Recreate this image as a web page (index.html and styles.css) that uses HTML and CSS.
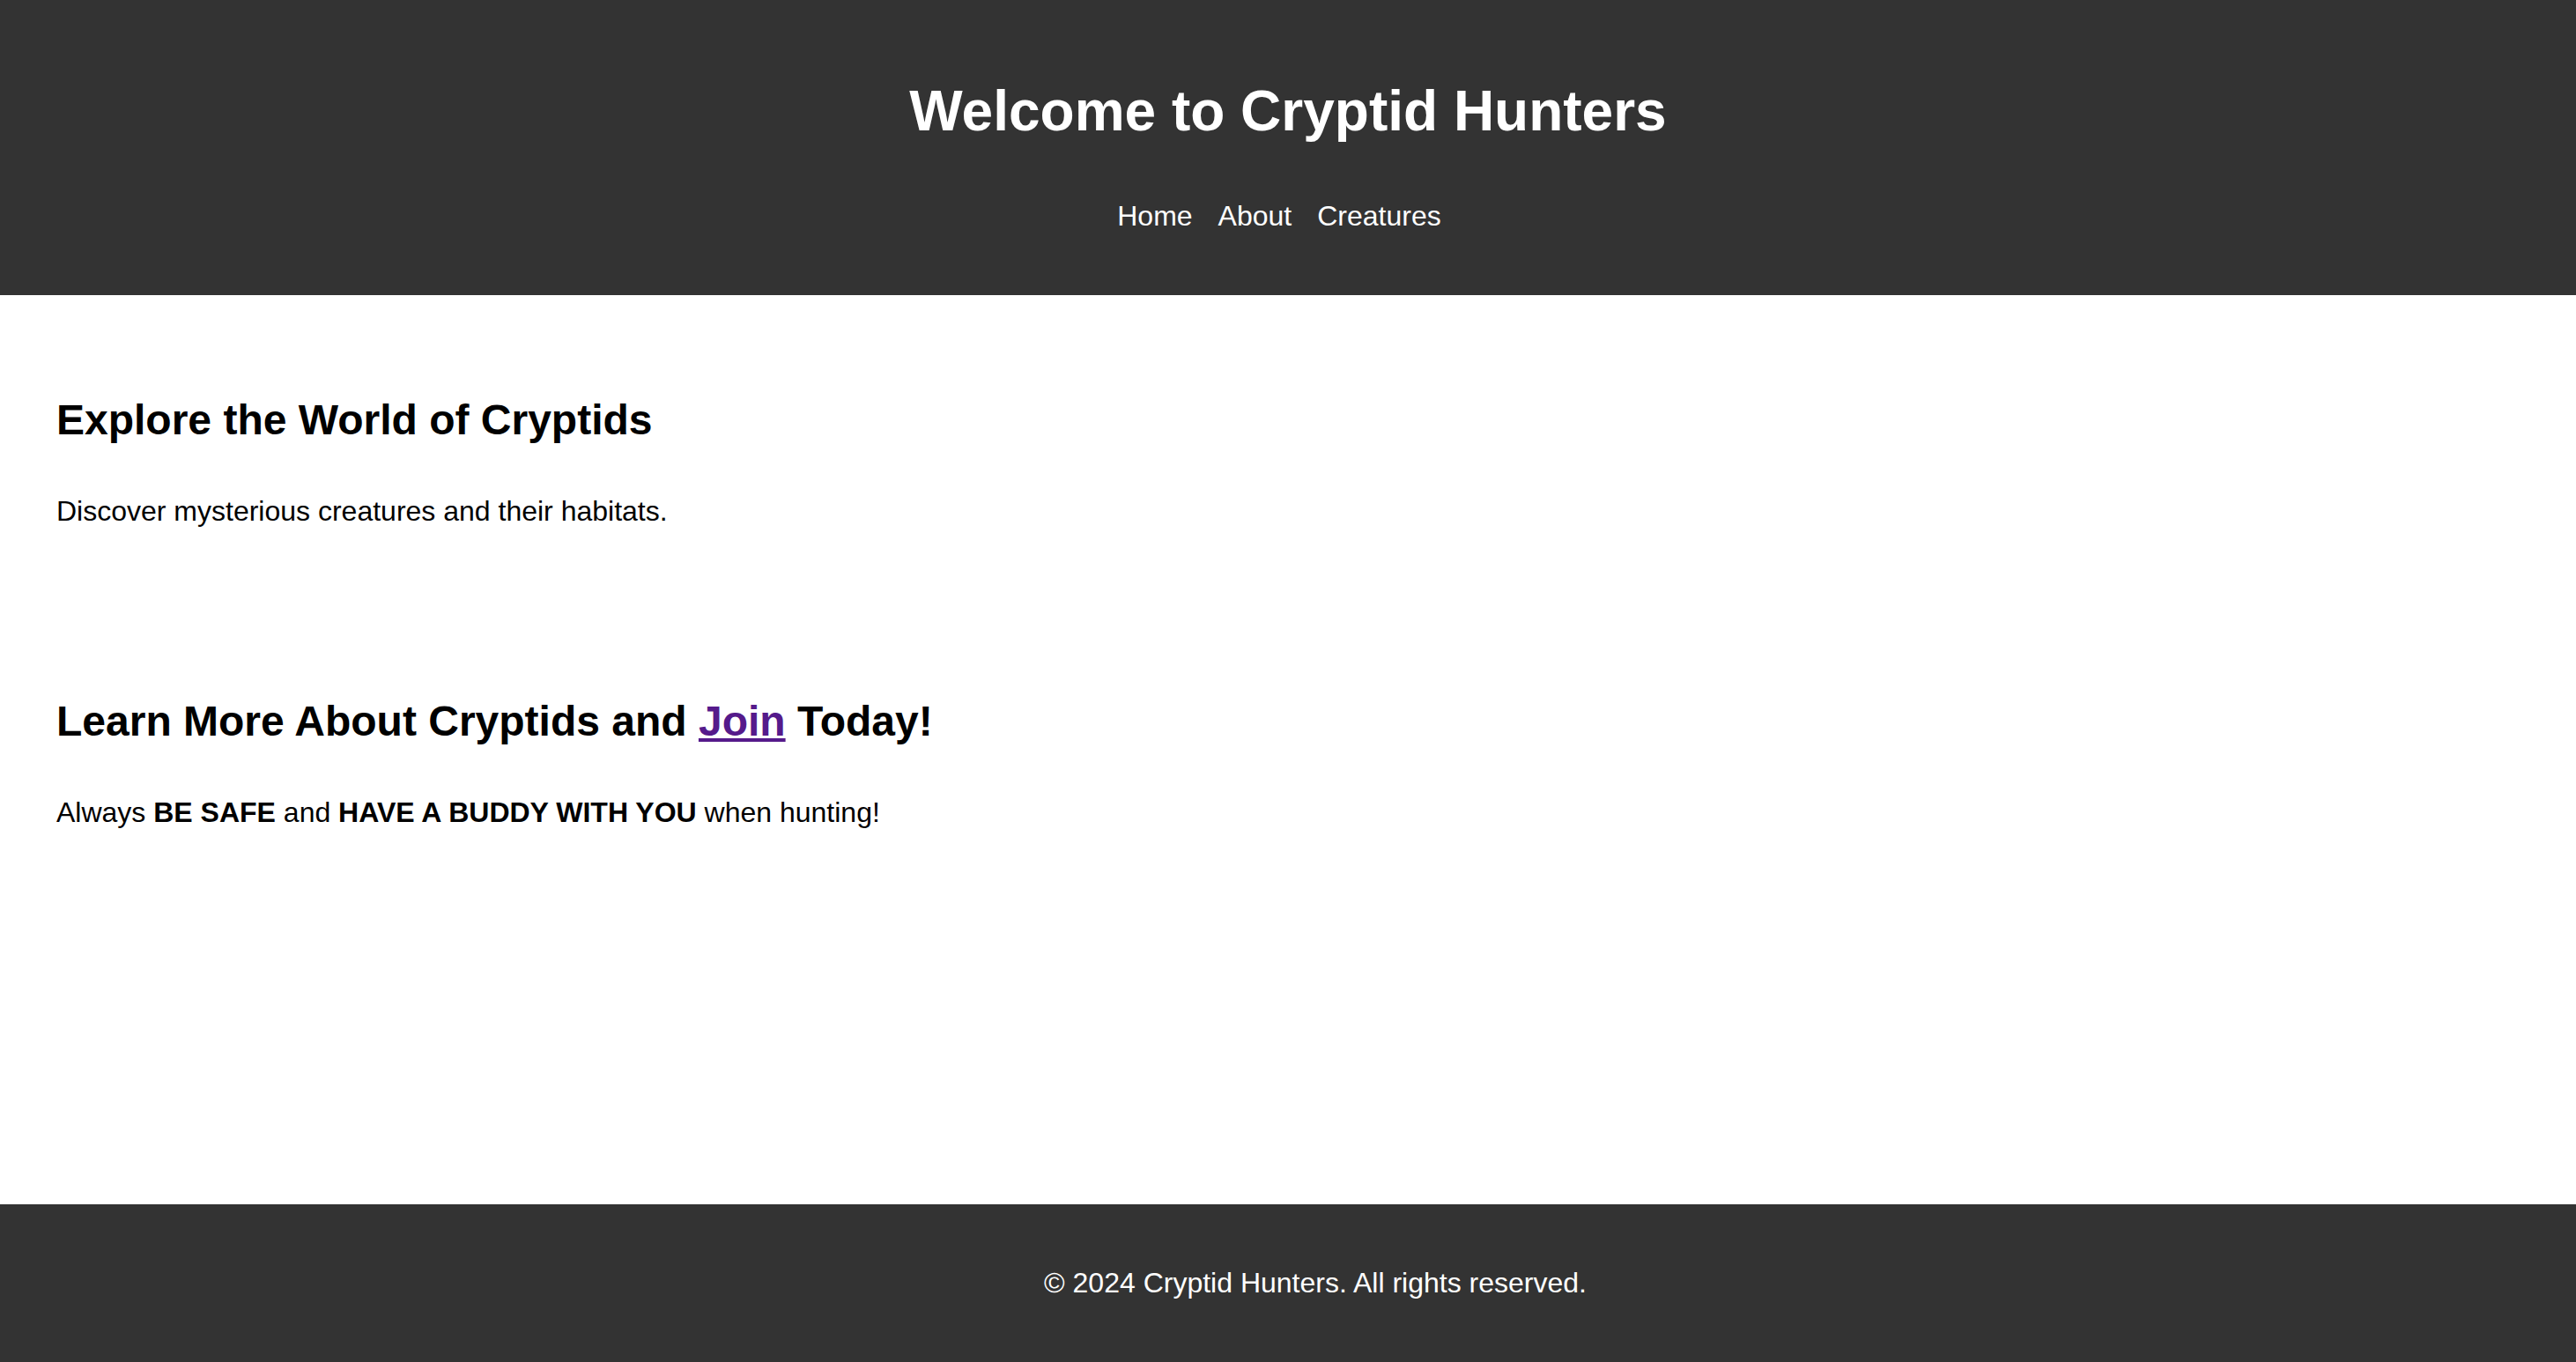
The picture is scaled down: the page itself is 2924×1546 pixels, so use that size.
FILE: index.html
```html
<!DOCTYPE html>
<html lang="en">
<head>
<meta charset="utf-8">
<title>Cryptid Hunters</title>
<link rel="stylesheet" href="styles.css">
</head>
<body>
  <header class="site-header">
    <h1 class="site-title">Welcome to Cryptid Hunters</h1>
    <nav class="site-nav">
      <ul class="nav-list">
        <li class="nav-item"><a class="nav-link" href="#">Home</a></li>
        <li class="nav-item"><a class="nav-link" href="#">About</a></li>
        <li class="nav-item"><a class="nav-link" href="#">Creatures</a></li>
      </ul>
    </nav>
  </header>
  <main class="content">
    <section class="block">
      <h2 class="block-title">Explore the World of Cryptids</h2>
      <p class="block-text">Discover mysterious creatures and their habitats.</p>
    </section>
    <section class="block">
      <h2 class="block-title">Learn More About Cryptids and <a class="join-link" href="#">Join</a> Today!</h2>
      <p class="block-text">Always <strong>BE SAFE</strong> and <strong>HAVE A BUDDY WITH YOU</strong> when hunting!</p>
    </section>
  </main>
  <footer class="site-footer">
    <p class="footer-text">&copy; 2024 Cryptid Hunters. All rights reserved.</p>
  </footer>
</body>
</html>
```
FILE: styles.css
```css
html, body {
  margin: 0;
  padding: 0;
}

body {
  font-family: "Liberation Sans", Arial, sans-serif;
  font-size: 32px;
  line-height: 1.6;
  color: #000;
  background: #fff;
  display: flex;
  flex-direction: column;
  min-height: 100vh;
}

.site-header {
  background: #333;
  color: #fff;
  text-align: center;
  padding: 75px 0 63px;
}

.site-title {
  font-size: 64px;
  font-weight: bold;
  line-height: 1.6;
  margin: 0 0 43px;
}

.nav-list {
  list-style: none;
  margin: 0;
  padding: 0 20px 0 0;
  display: flex;
  justify-content: center;
  gap: 29px;
}

.nav-item {
  line-height: 1.6;
}

.nav-link {
  color: #fff;
  text-decoration: none;
}

.content {
  flex: 1;
  padding: 32px;
  display: flex;
  flex-direction: column;
  gap: 38px;
}

.block {
  padding: 32px;
}

.block-title {
  font-size: 48px;
  font-weight: bold;
  line-height: 1.6;
  margin: 40px 0;
}

.block-text {
  margin: 32px 0;
}

.join-link {
  color: #551a8b;
  text-decoration: underline;
}

.site-footer {
  background: #333;
  color: #fff;
  text-align: center;
  padding: 32px 0 32px 62px;
}

.footer-text {
  margin: 32px 0;
}
```
